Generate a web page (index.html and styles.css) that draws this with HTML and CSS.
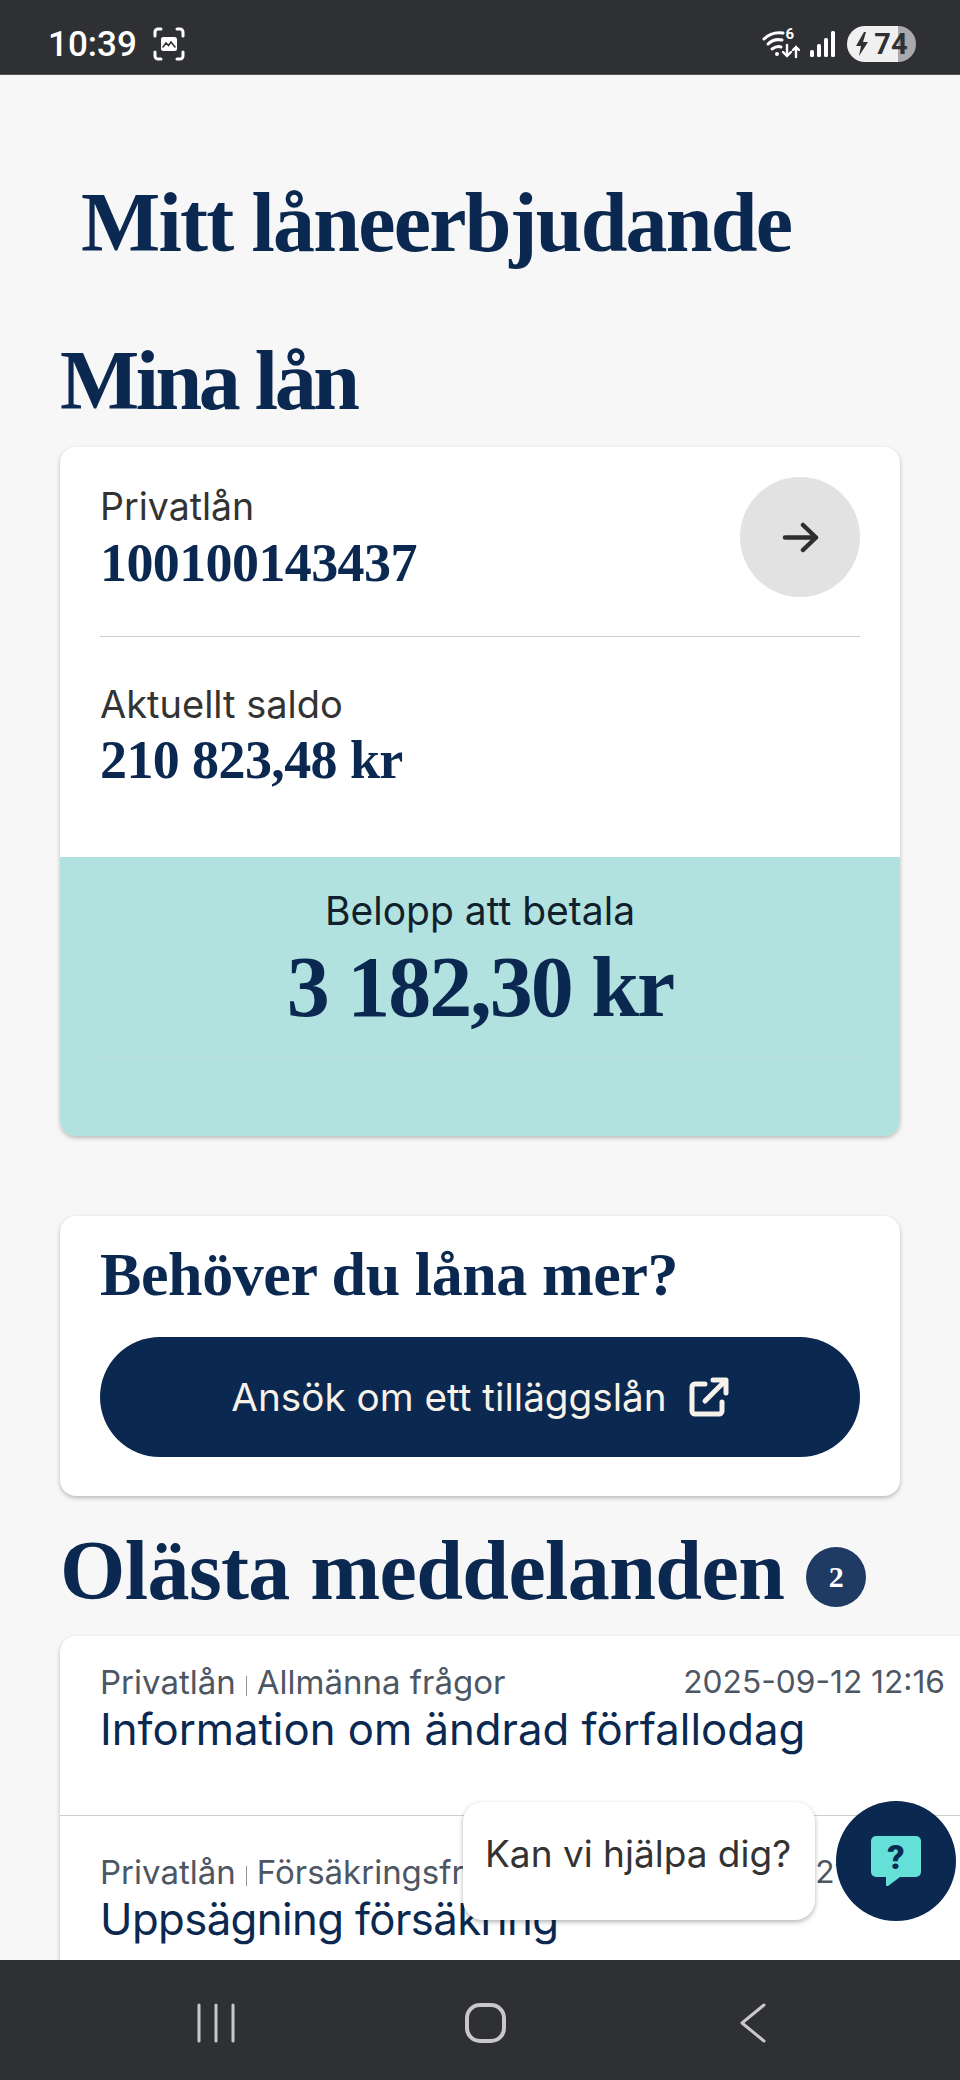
FILE: index.html
```html
<!DOCTYPE html>
<html lang="sv">
<head>
  <meta charset="UTF-8" />
  <meta name="viewport" content="width=device-width, initial-scale=1.0"/>
  <title>Mitt låneerbjudande</title>
  <link rel="stylesheet" href="styles.css">
</head>
<body>
  <div class="status-bar">
    <div class="status-left">
      <span class="clock">10:39</span>
      <svg class="shot-icon" width="32" height="34" viewBox="0 0 32 34" fill="none" stroke="#fff" stroke-width="3" stroke-linecap="round">
        <path d="M2 9V5a3 3 0 0 1 3-3h3M24 2h3a3 3 0 0 1 3 3v4M30 25v4a3 3 0 0 1-3 3h-3M8 32H5a3 3 0 0 1-3-3v-4"/>
        <rect x="8" y="10" width="16" height="14" rx="2.5" fill="#fff" stroke="none"/>
        <path d="M10 20l3-4 2.5 2.5L18 15l4 5" stroke="#2f3034" stroke-width="1.6" fill="none"/>
      </svg>
    </div>
    <div class="status-right">
      <div class="wifi">
        <svg width="38" height="30" viewBox="0 0 38 30" fill="none" stroke="#fff" stroke-linecap="round">
          <path d="M2 10C7 5 14 3 21 4" stroke-width="3"/>
          <path d="M6 15c4-4 9-5 14-4" stroke-width="3"/>
          <path d="M10 20c3-2 6-3 9-2" stroke-width="3"/>
          <circle cx="15" cy="25" r="2" fill="#fff" stroke="none"/>
          <path d="M25 16v11M21 23l4 4 4-4M34 28V18M31 21l3-3 3 3" stroke-width="2.4"/>
        </svg>
        <span class="wifi-six">6</span>
      </div>
      <svg class="signal" width="25" height="26" viewBox="0 0 25 26" fill="#fff">
        <rect x="0" y="19" width="4" height="7" rx="1.5"/>
        <rect x="7" y="13" width="4" height="13" rx="1.5" fill="#fff"/>
        <rect x="14" y="7" width="4" height="19" rx="1.5"/>
        <rect x="21" y="0" width="4" height="26" rx="1.5"/>
      </svg>
      <div class="battery">
        <svg width="14" height="24" viewBox="0 0 14 24" fill="#2f3034"><path d="M9 0L1 14h5l-2 10 9-14H8l3-10z"/></svg>
        <span>74</span>
      </div>
    </div>
  </div>

  <main class="page">
    <h1 class="page-title">Mitt låneerbjudande</h1>
    <h2 class="section-title loans-title">Mina lån</h2>

    <section class="card loan-card">
      <div class="loan-top">
        <div class="loan-info">
          <div class="label">Privatlån</div>
          <div class="value">100100143437</div>
        </div>
        <div class="arrow-btn">
          <svg width="37" height="31" viewBox="0 0 37 31" fill="none" stroke="#2e2e2e" stroke-width="4.5" stroke-linecap="round" stroke-linejoin="round">
            <path d="M3 15.5h31M21 3l13 12.5L21 28"/>
          </svg>
        </div>
      </div>
      <div class="loan-balance">
        <div class="label label-wide">Aktuellt saldo</div>
        <div class="value">210 823,48 kr</div>
      </div>
      <div class="loan-due">
        <div class="due-label">Belopp att betala</div>
        <div class="due-amount">3 182,30 kr</div>
        <div class="due-line"></div>
      </div>
    </section>

    <section class="card more-card">
      <h3 class="more-title">Behöver du låna mer?</h3>
      <a class="apply-btn">
        <span>Ansök om ett tilläggslån</span>
        <svg width="40" height="40" viewBox="0 0 40 40" fill="none" stroke="#f6f1e9" stroke-width="5" stroke-linecap="round" stroke-linejoin="round">
          <path d="M16 7H6a3 3 0 0 0-3 3v24a3 3 0 0 0 3 3h24a3 3 0 0 0 3-3V25"/>
          <path d="M16 24L36 4M24 3h13v13"/>
        </svg>
      </a>
    </section>

    <div class="unread-head">
      <h2 class="section-title unread-title">Olästa meddelanden</h2>
      <span class="badge">2</span>
    </div>

    <section class="card messages">
      <div class="msg">
        <div class="msg-meta">
          <span>Privatlån<i class="sep"></i>Allmänna frågor</span>
          <span class="msg-date">2025-09-12 12:16</span>
        </div>
        <div class="msg-title">Information om ändrad förfallodag</div>
      </div>
      <div class="msg msg-next">
        <div class="msg-meta">
          <span>Privatlån<i class="sep"></i>Försäkringsfrågor</span>
          <span class="msg-date">2025-08-21 09:42</span>
        </div>
        <div class="msg-title">Uppsägning försäkring</div>
      </div>
    </section>

    <div class="help-bubble">Kan vi hjälpa dig?</div>
    <div class="help-fab">
      <svg width="50" height="50" viewBox="0 0 50 50">
        <path d="M5 0h40a5 5 0 0 1 5 5v31a5 5 0 0 1-5 5H29L17 50c-1 .6-2 0-2-1v-8H5a5 5 0 0 1-5-5V5a5 5 0 0 1 5-5z" fill="#64e0d9"/>
        <text x="25" y="33" text-anchor="middle" class="fab-mark">?</text>
      </svg>
    </div>
  </main>

  <div class="nav-bar">
    <svg width="38" height="40" viewBox="0 0 38 40" stroke="#c8c8ca" stroke-width="3" stroke-linecap="round"><path d="M2 2v36M19 2v36M36 2v36"/></svg>
    <svg class="nav-home" width="41" height="40" viewBox="0 0 41 40" fill="none" stroke="#c8c8ca" stroke-width="4"><rect x="2" y="2" width="37" height="36" rx="13"/></svg>
    <svg width="28" height="40" viewBox="0 0 28 40" fill="none" stroke="#c8c8ca" stroke-width="3" stroke-linecap="round" stroke-linejoin="round"><path d="M25 2L3 20l22 18"/></svg>
  </div>
</body>
</html>
```

FILE: styles.css
```css
* {
  box-sizing: border-box;
}
html, body {
  margin: 0;
  padding: 0;
}
body {
  width: 960px;
  height: 2080px;
  overflow: hidden;
  display: flex;
  flex-direction: column;
  background: #f7f7f7;
  font-family: "Inter", "Liberation Sans", sans-serif;
  color: #333;
}

/* status bar */
.status-bar {
  height: 75px;
  flex: none;
  background: #2f3034;
  border-bottom: 1px solid #55565a;
  display: flex;
  align-items: center;
  justify-content: space-between;
  padding: 14px 44px 0 48px;
  color: #fff;
}
.status-left {
  display: flex;
  align-items: center;
  gap: 16px;
}
.clock {
  font-family: "Roboto", sans-serif;
  font-size: 35px;
  font-weight: 500;
}
.status-right {
  display: flex;
  align-items: center;
  gap: 10px;
}
.wifi {
  position: relative;
  width: 38px;
  height: 30px;
}
.wifi-six {
  position: absolute;
  top: -4px;
  right: 6px;
  font-family: "Roboto", sans-serif;
  font-size: 15px;
  font-weight: 700;
  line-height: 18px;
}
.battery {
  width: 69px;
  height: 36px;
  margin-left: 2px;
  border-radius: 18px;
  background: linear-gradient(90deg, #f0f0f0 74%, #a9a9ab 74%);
  color: #2f3034;
  display: flex;
  align-items: center;
  justify-content: center;
  gap: 5px;
  font-family: "Roboto", sans-serif;
  font-size: 29px;
  font-weight: 700;
}

/* page */
.page {
  position: relative;
  flex: 1;
  overflow: hidden;
  padding: 98px 60px 0;
}
.page-title,
.section-title,
.more-title,
.value,
.due-amount {
  font-family: "Liberation Serif", serif;
  font-weight: 700;
  color: #0a2850;
  margin: 0;
}
.page-title {
  font-size: 84px;
  line-height: 100px;
  margin-left: 21px;
  letter-spacing: -1.8px;
}
.section-title {
  font-size: 84px;
  line-height: 100px;
}
.loans-title {
  margin-top: 58px;
  margin-bottom: 16px;
  letter-spacing: -3.5px;
}
.unread-title {
  letter-spacing: -0.6px;
}
.card {
  background: #fff;
  border-radius: 16px;
  box-shadow: 0 2px 4px rgba(0,0,0,0.25);
}

/* loan card */
.loan-card {
  height: 689px;
  overflow: hidden;
  display: flex;
  flex-direction: column;
}
.loan-top {
  margin: 0 40px;
  height: 190px;
  border-bottom: 1px solid #cfcfcf;
  display: flex;
  justify-content: space-between;
  padding-top: 30px;
}
.loan-info {
  padding-top: 8px;
}
.label {
  font-size: 37.5px;
  line-height: 44px;
}
.label-wide {
  font-size: 38px;
}
.value {
  font-size: 54px;
  line-height: 68px;
  letter-spacing: -0.6px;
}
.arrow-btn {
  width: 120px;
  height: 120px;
  border-radius: 50%;
  background: #e2e2e2;
  display: flex;
  align-items: center;
  justify-content: center;
}
.loan-balance {
  padding: 45px 40px 0;
  height: 220px;
}
.loan-due {
  flex: 1;
  background: #b2e2df;
  text-align: center;
  padding-top: 32px;
}
.due-label {
  font-size: 39px;
  line-height: 44px;
  color: #10202c;
}
.due-amount {
  font-size: 86px;
  line-height: 108px;
  letter-spacing: -2px;
}
.due-line {
  height: 1px;
  margin: 16px 40px 0;
  background: #c8dedc;
}

/* more card */
.more-card {
  margin-top: 80px;
  height: 280px;
  padding: 20px 40px 0;
}
.more-title {
  font-size: 62px;
  line-height: 76px;
  letter-spacing: -0.4px;
}
.apply-btn {
  margin-top: 25px;
  height: 120px;
  border-radius: 60px;
  background: #0a2850;
  color: #f6f1e9;
  font-size: 38.7px;
  display: flex;
  align-items: center;
  justify-content: center;
  gap: 22px;
}

/* messages */
.unread-head {
  margin-top: 25px;
  display: flex;
  align-items: center;
  gap: 22px;
}
.badge {
  width: 60px;
  height: 60px;
  margin-top: 12px;
  border-radius: 50%;
  background: #1f3b64;
  color: #fff;
  font-family: "Liberation Serif", serif;
  font-weight: 700;
  font-size: 30px;
  display: flex;
  align-items: center;
  justify-content: center;
}
.messages {
  width: 940px;
  margin-top: 15px;
  height: 400px;
}
.msg {
  height: 180px;
  padding: 26px 55px 0 40px;
  border-bottom: 1px solid #cfcfcf;
}
.msg-next {
  padding-top: 36px;
  border-bottom: 0;
}
.msg-next .msg-title {
  letter-spacing: -0.6px;
}
.msg-meta {
  display: flex;
  justify-content: space-between;
  font-size: 33px;
  line-height: 40px;
  color: #4d5663;
}
.msg-date {
  font-size: 31.7px;
}
.sep {
  display: inline-block;
  width: 1px;
  height: 20px;
  margin: 0 10px;
  background: #8d939c;
  vertical-align: -2px;
}
.msg-title {
  margin-top: 2px;
  font-size: 43.7px;
  line-height: 52px;
  color: #0a2850;
}

/* help overlay */
.help-bubble {
  position: absolute;
  left: 463px;
  top: 1727px;
  width: 352px;
  height: 118px;
  padding: 27px 0 0 22px;
  border-radius: 20px;
  background: #fff;
  box-shadow: 0 2px 5px rgba(0,0,0,0.3);
  font-size: 37px;
  line-height: 50px;
  color: #333;
}
.help-fab {
  position: absolute;
  left: 836px;
  top: 1726px;
  width: 120px;
  height: 120px;
  border-radius: 50%;
  background: #0a2850;
  display: flex;
  align-items: center;
  justify-content: center;
}
.fab-mark {
  font-family: "Roboto", sans-serif;
  font-weight: 900;
  font-size: 34px;
  fill: #0a2850;
}

/* android nav */
.nav-bar {
  height: 120px;
  flex: none;
  background: #2f3034;
  position: relative;
  z-index: 2;
  display: flex;
  align-items: center;
  padding: 5px 193px 0 197px;
  justify-content: space-between;
}
.nav-home {
  margin-left: -4px;
}
```
